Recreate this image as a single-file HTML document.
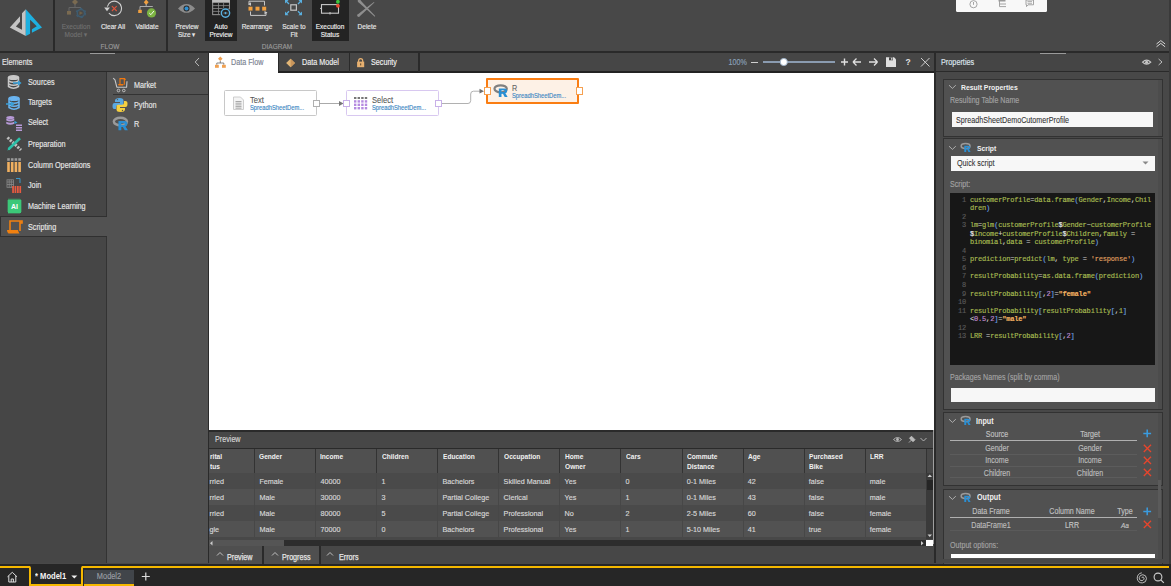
<!DOCTYPE html>
<html><head><meta charset="utf-8"><style>
html,body{margin:0;padding:0;width:1171px;height:586px;overflow:hidden;background:#484848;}
body>div,body>svg{position:absolute;}
body>div{-webkit-text-stroke:0.15px currentColor;}
body{font-family:"Liberation Sans",sans-serif;position:relative;}
</style></head><body>
<div style="left:0px;top:0px;width:1171px;height:51px;background:#484848;"></div>
<div style="left:0px;top:51px;width:1171px;height:2px;background:#2a2a2a;"></div>
<div style="left:53px;top:0px;width:2px;height:51px;background:#2a2a2a;"></div>
<div style="left:166px;top:0px;width:2px;height:51px;background:#2a2a2a;"></div>
<svg style="left:0px;top:0px;" width="54" height="51" viewBox="0 0 54 51"><path d="M25.8,9.2 L25.8,36 L9.8,27.5 L20,16.2 L20,21.7 L15.9,26.6 L22,29.8 L22,13.3 Z" fill="#c4c4c4"/><path d="M25.8,9.2 L42,27.5 L31.9,32.7 L31.9,29.3 L36.8,26.3 L30.1,19.7 L30.1,33.8 L25.8,36 Z" fill="#1eb0e0"/></svg>
<svg style="left:60px;top:0px;" width="32" height="20" viewBox="0 0 32 20"><path d="M15,-1 L18,2 L15,5 L12,2 Z" fill="#7a6a50"/><path d="M15,4 V7.5 M9,7.5 H21 M9,7.5 V11" stroke="#666" stroke-width="1" fill="none"/><rect x="7" y="11" width="4" height="3.6" fill="#7a6a50"/><circle cx="20.9" cy="13.1" r="3.6" fill="none" stroke="#3e5c70" stroke-width="1.4"/><circle cx="20.9" cy="13.1" r="4.6" fill="none" stroke="#3e5c70" stroke-width="1.3" stroke-dasharray="2.4 2.63"/><path d="M19.5,11.2 L23,13.1 L19.5,15 Z" fill="#6e6048"/></svg>
<div style="left:-24.00px;width:200px;text-align:center;top:23px;font-size:7.47px;line-height:7.47px;color:#707070;font-weight:normal;font-family:'Liberation Sans',sans-serif;white-space:nowrap;transform:scaleX(0.8696);transform-origin:center top;">Execution</div>
<div style="left:-24.00px;width:200px;text-align:center;top:31px;font-size:7.47px;line-height:7.47px;color:#707070;font-weight:normal;font-family:'Liberation Sans',sans-serif;white-space:nowrap;transform:scaleX(0.8696);transform-origin:center top;">Model ▾</div>
<svg style="left:104px;top:0px;" width="22" height="20" viewBox="0 0 22 20"><path d="M3.35,6.54 A7.2,7.2 0 1 1 4.87,13.12" fill="none" stroke="#d0d0d0" stroke-width="1.1"/><path d="M0.2,7.6 L5.9,7.6 L3,11.2 Z" fill="#d0d0d0"/><path d="M7.9,6.2 L12.7,11 M12.7,6.2 L7.9,11" stroke="#e0553c" stroke-width="1.1"/></svg>
<div style="left:12.50px;width:200px;text-align:center;top:23px;font-size:7.47px;line-height:7.47px;color:#e8e8e8;font-weight:normal;font-family:'Liberation Sans',sans-serif;white-space:nowrap;transform:scaleX(0.8696);transform-origin:center top;">Clear All</div>
<svg style="left:132px;top:0px;" width="30" height="20" viewBox="0 0 30 20"><path d="M14.2,-0.5 L16.6,2.2 L14.2,4.9 L11.8,2.2 Z" fill="#f0a040"/><path d="M14.2,4 V6.5 M8,6.5 H20.8 M8,6.5 V10" stroke="#aaa" stroke-width="1" fill="none"/><rect x="6.2" y="9.8" width="3.6" height="3.2" fill="#f0a040"/><circle cx="19.5" cy="12.9" r="4.6" fill="#7cb342"/><path d="M17.2,13 L18.9,14.7 L21.9,11" stroke="#fff" stroke-width="0.9" fill="none"/></svg>
<div style="left:47.20px;width:200px;text-align:center;top:23px;font-size:7.47px;line-height:7.47px;color:#e8e8e8;font-weight:normal;font-family:'Liberation Sans',sans-serif;white-space:nowrap;transform:scaleX(0.8696);transform-origin:center top;">Validate</div>
<svg style="left:176px;top:0px;" width="22" height="18" viewBox="0 0 22 18"><path d="M2,8.4 Q10.5,-0.5 19,8.4 Q10.5,17.3 2,8.4 Z" fill="#8c8c8c"/><circle cx="10.5" cy="8.4" r="3" fill="#2a2a2a"/><circle cx="10.5" cy="8.4" r="2" fill="#2f8fd0"/></svg>
<div style="left:87.00px;width:200px;text-align:center;top:23px;font-size:7.47px;line-height:7.47px;color:#e8e8e8;font-weight:normal;font-family:'Liberation Sans',sans-serif;white-space:nowrap;transform:scaleX(0.8696);transform-origin:center top;">Preview</div>
<div style="left:87.00px;width:200px;text-align:center;top:31px;font-size:7.47px;line-height:7.47px;color:#e8e8e8;font-weight:normal;font-family:'Liberation Sans',sans-serif;white-space:nowrap;transform:scaleX(0.8696);transform-origin:center top;">Size ▾</div>
<div style="left:205px;top:0px;width:32px;height:41px;background:#232323;"></div>
<svg style="left:205px;top:0px;" width="32" height="20" viewBox="0 0 32 20"><rect x="7.7" y="-1" width="16.7" height="15.7" fill="#202020" stroke="#a8a8a8" stroke-width="0.9"/><rect x="7.2" y="-1" width="17.6" height="3.7" fill="#bdbdbd"/><path d="M7.7,5.6 H24.4 M7.7,8.5 H24.4 M7.7,11.4 H24.4 M13.5,2.7 V14.7 M18.6,2.7 V14.7" stroke="#8a8a8a" stroke-width="0.8"/><circle cx="20.5" cy="13.1" r="5.5" fill="#232323"/><circle cx="20.5" cy="13.1" r="4.15" fill="none" stroke="#5ab0e0" stroke-width="1.4"/><path d="M17.7,13.1 Q20.5,10.7 23.3,13.1 Q20.5,15.5 17.7,13.1Z" fill="none" stroke="#4a4a4a" stroke-width="0.8"/><circle cx="20.5" cy="13.1" r="1.1" fill="#5ab0e0"/></svg>
<div style="left:121.00px;width:200px;text-align:center;top:23px;font-size:7.47px;line-height:7.47px;color:#f0f0f0;font-weight:normal;font-family:'Liberation Sans',sans-serif;white-space:nowrap;transform:scaleX(0.8696);transform-origin:center top;">Auto</div>
<div style="left:121.00px;width:200px;text-align:center;top:31px;font-size:7.47px;line-height:7.47px;color:#f0f0f0;font-weight:normal;font-family:'Liberation Sans',sans-serif;white-space:nowrap;transform:scaleX(0.8696);transform-origin:center top;">Preview</div>
<svg style="left:245px;top:0px;" width="25" height="20" viewBox="0 0 25 20"><path d="M4,4.5 V1.2 H19.5 V5.5 M21,12 V15.4 H5.5 V11.5" stroke="#c8c8c8" stroke-width="1" fill="none"/><path d="M3,4.2 L6,2.2 L6,5.8Z M22.5,12.6 L19.5,14.6 L19.5,11Z" fill="#c8c8c8"/><rect x="3.5" y="6.7" width="4" height="3.9" fill="#f0a040"/><rect x="10.5" y="6.7" width="4" height="3.9" fill="#f0a040"/><rect x="17.2" y="6.7" width="4" height="3.9" fill="#f0a040"/></svg>
<div style="left:157.00px;width:200px;text-align:center;top:23px;font-size:7.47px;line-height:7.47px;color:#e8e8e8;font-weight:normal;font-family:'Liberation Sans',sans-serif;white-space:nowrap;transform:scaleX(0.8696);transform-origin:center top;">Rearrange</div>
<svg style="left:280px;top:0px;" width="27" height="18" viewBox="0 0 27 18"><rect x="10.8" y="4.8" width="5.6" height="5.4" fill="none" stroke="#c4c4c4" stroke-width="1.2"/><g fill="#5ab0e0"><path d="M5,0 H8.6 L5,3.6Z M22,0 H18.4 L22,3.6Z M5,15.2 H8.6 L5,11.6Z M22,15.2 H18.4 L22,11.6Z"/></g><path d="M6,1 L9,4 M21,1 L18,4 M6,14.2 L9,11.2 M21,14.2 L18,11.2" stroke="#5ab0e0" stroke-width="1.3"/></svg>
<div style="left:193.50px;width:200px;text-align:center;top:23px;font-size:7.47px;line-height:7.47px;color:#e8e8e8;font-weight:normal;font-family:'Liberation Sans',sans-serif;white-space:nowrap;transform:scaleX(0.8696);transform-origin:center top;">Scale to</div>
<div style="left:193.50px;width:200px;text-align:center;top:31px;font-size:7.47px;line-height:7.47px;color:#e8e8e8;font-weight:normal;font-family:'Liberation Sans',sans-serif;white-space:nowrap;transform:scaleX(0.8696);transform-origin:center top;">Fit</div>
<div style="left:312px;top:0px;width:36.5px;height:41px;background:#232323;"></div>
<svg style="left:312px;top:0px;" width="37" height="18" viewBox="0 0 37 18"><rect x="9.5" y="4.6" width="17" height="8.6" fill="none" stroke="#c8c8c8" stroke-width="1.1"/><path d="M8,8.4 H10 M18,12 V14.5" stroke="#c8c8c8" stroke-width="1"/><circle cx="25.9" cy="1.8" r="1.9" fill="#3ec63e"/><circle cx="25.9" cy="5.8" r="1.9" fill="#e8452c"/></svg>
<div style="left:230.20px;width:200px;text-align:center;top:23px;font-size:7.47px;line-height:7.47px;color:#f0f0f0;font-weight:normal;font-family:'Liberation Sans',sans-serif;white-space:nowrap;transform:scaleX(0.8696);transform-origin:center top;">Execution</div>
<div style="left:230.20px;width:200px;text-align:center;top:31px;font-size:7.47px;line-height:7.47px;color:#f0f0f0;font-weight:normal;font-family:'Liberation Sans',sans-serif;white-space:nowrap;transform:scaleX(0.8696);transform-origin:center top;">Status</div>
<svg style="left:355px;top:0px;" width="24" height="20" viewBox="0 0 24 20"><g fill="#8e8e8e"><path d="M3.12,1.9 Q12,9.5 19.72,16.69 L20.28,16.11 Q13,8.5 5.08,-0.1 Z"/><circle cx="4.1" cy="0.9" r="1.4"/><path d="M18.94,1.9 Q10,8.5 2.69,14.43 L4.51,16.57 Q12,9.5 19.46,2.5 Z"/><circle cx="3.6" cy="15.5" r="1.4"/></g></svg>
<div style="left:266.80px;width:200px;text-align:center;top:23px;font-size:7.47px;line-height:7.47px;color:#e8e8e8;font-weight:normal;font-family:'Liberation Sans',sans-serif;white-space:nowrap;transform:scaleX(0.8696);transform-origin:center top;">Delete</div>
<div style="left:10.00px;width:200px;text-align:center;top:43px;font-size:7.47px;line-height:7.47px;color:#9a9a9a;font-weight:normal;font-family:'Liberation Sans',sans-serif;white-space:nowrap;transform:scaleX(0.8696);transform-origin:center top;">FLOW</div>
<div style="left:176.50px;width:200px;text-align:center;top:43px;font-size:7.47px;line-height:7.47px;color:#9a9a9a;font-weight:normal;font-family:'Liberation Sans',sans-serif;white-space:nowrap;transform:scaleX(0.8696);transform-origin:center top;">DIAGRAM</div>
<div style="left:955.5px;top:0px;width:91px;height:11.7px;background:#f8f8f8;border-radius:0 0 1.5px 1.5px"></div>
<svg style="left:955px;top:0px;" width="92" height="12" viewBox="0 0 92 12"><circle cx="18.5" cy="4.2" r="3.6" fill="none" stroke="#9a9a9a" stroke-width="0.9"/><path d="M18.5,2 V4.8" stroke="#9a9a9a" stroke-width="0.9"/><rect x="43.5" y="-1" width="7" height="2.5" fill="#9a9a9a"/><path d="M44.5,1 V6.6 H51 M44.5,4 H51" stroke="#9a9a9a" stroke-width="0.9" fill="none"/><path d="M71,0 H78.5 V4.8 H73 L71.5,6.6 L71.5,4.8 H71 Z" fill="none" stroke="#9a9a9a" stroke-width="0.9"/><path d="M72.5,1.6 H77 M72.5,3.3 H77" stroke="#9a9a9a" stroke-width="0.8"/></svg>
<svg style="left:1155px;top:38px;" width="12" height="10" viewBox="0 0 12 10"><path d="M1.5,6 L5.8,2.6 L10.1,6 M1.5,8.8 L5.8,5.4 L10.1,8.8" stroke="#d8d8d8" stroke-width="1" fill="none"/></svg>
<div style="left:0px;top:53px;width:208px;height:18px;background:#454545;"></div>
<div style="left:0px;top:71px;width:208px;height:1px;background:#2a2a2a;"></div>
<div style="left:2.4px;top:58px;font-size:8.39px;line-height:8.39px;color:#e6e6e6;font-weight:normal;font-family:'Liberation Sans',sans-serif;white-space:nowrap;transform:scaleX(0.8696);transform-origin:left top;">Elements</div>
<svg style="left:193px;top:56px;" width="8" height="12" viewBox="0 0 8 12"><path d="M6,2 L2.2,6 L6,10" stroke="#bbb" stroke-width="1" fill="none"/></svg>
<div style="left:0px;top:72px;width:106px;height:491px;background:#464646;"></div>
<div style="left:106px;top:72px;width:1px;height:491px;background:#333;"></div>
<div style="left:107px;top:72px;width:101px;height:491px;background:#525252;"></div>
<div style="left:208px;top:53px;width:1px;height:510px;background:#2a2a2a;"></div>
<div style="left:0px;top:216px;width:107px;height:21px;background:#525252;box-sizing:border-box;border-top:1px solid #303030;border-bottom:1px solid #303030;border-left:1px solid #303030"></div>
<div style="left:106px;top:72px;width:1px;height:144px;background:#333;"></div>
<div style="left:106px;top:237px;width:1px;height:326px;background:#333;"></div>
<div style="left:27.5px;top:78px;font-size:8.34px;line-height:8.34px;color:#e6e6e6;font-weight:normal;font-family:'Liberation Sans',sans-serif;white-space:nowrap;transform:scaleX(0.8696);transform-origin:left top;">Sources</div>
<div style="left:27.5px;top:98px;font-size:8.34px;line-height:8.34px;color:#e6e6e6;font-weight:normal;font-family:'Liberation Sans',sans-serif;white-space:nowrap;transform:scaleX(0.8696);transform-origin:left top;">Targets</div>
<div style="left:27.5px;top:118px;font-size:8.34px;line-height:8.34px;color:#e6e6e6;font-weight:normal;font-family:'Liberation Sans',sans-serif;white-space:nowrap;transform:scaleX(0.8696);transform-origin:left top;">Select</div>
<div style="left:27.5px;top:140px;font-size:8.34px;line-height:8.34px;color:#e6e6e6;font-weight:normal;font-family:'Liberation Sans',sans-serif;white-space:nowrap;transform:scaleX(0.8696);transform-origin:left top;">Preparation</div>
<div style="left:27.5px;top:161px;font-size:8.34px;line-height:8.34px;color:#e6e6e6;font-weight:normal;font-family:'Liberation Sans',sans-serif;white-space:nowrap;transform:scaleX(0.8696);transform-origin:left top;">Column Operations</div>
<div style="left:27.5px;top:181px;font-size:8.34px;line-height:8.34px;color:#e6e6e6;font-weight:normal;font-family:'Liberation Sans',sans-serif;white-space:nowrap;transform:scaleX(0.8696);transform-origin:left top;">Join</div>
<div style="left:27.5px;top:202px;font-size:8.34px;line-height:8.34px;color:#e6e6e6;font-weight:normal;font-family:'Liberation Sans',sans-serif;white-space:nowrap;transform:scaleX(0.8696);transform-origin:left top;">Machine Learning</div>
<div style="left:27.5px;top:223px;font-size:8.34px;line-height:8.34px;color:#e6e6e6;font-weight:normal;font-family:'Liberation Sans',sans-serif;white-space:nowrap;transform:scaleX(0.8696);transform-origin:left top;">Scripting</div>
<svg style="left:7px;top:74px;" width="16" height="17" viewBox="0 0 16 17"><g fill="none" stroke="#c8c8c8" stroke-width="1.5"><ellipse cx="6.5" cy="3.5" rx="5" ry="1.8" fill="#c8c8c8"/><path d="M1.5,3.5 V12.5 Q6.5,15.8 11.5,12.5 V3.5 M1.5,6.8 Q6.5,9.8 11.5,6.8 M1.5,9.8 Q6.5,12.8 11.5,9.8"/></g><path d="M6,8.2 H11 V6.2 L14.6,9 L11,11.8 V9.8 H6Z" fill="#3aa0d8"/></svg>
<svg style="left:5px;top:95px;" width="16" height="17" viewBox="0 0 16 17"><g fill="none" stroke="#6ab4f0" stroke-width="1.5"><ellipse cx="9" cy="3.5" rx="5" ry="1.8" fill="#6ab4f0"/><path d="M4,3.5 V12.5 Q9,15.8 14,12.5 V3.5 M4,6.8 Q9,9.8 14,6.8 M4,9.8 Q9,12.8 14,9.8"/></g><path d="M1,8.2 H6 V6.2 L9.6,9 L6,11.8 V9.8 H1Z" fill="#3aa0d8"/></svg>
<svg style="left:5px;top:115px;" width="18" height="17" viewBox="0 0 18 17"><g fill="#b79ad8"><ellipse cx="5.3" cy="2.6" rx="4" ry="1.6"/><path d="M1.3,3.6 Q5.3,5.6 9.3,3.6 V5.6 Q5.3,7.6 1.3,5.6Z M1.3,6.8 Q5.3,8.8 9.3,6.8 V8.8 Q5.3,10.8 1.3,8.8Z"/><rect x="11" y="9.5" width="6" height="1.5"/><rect x="11" y="12" width="6" height="1.5"/><rect x="11" y="14.5" width="6" height="1.5"/></g><path d="M9.5,5.8 L12.5,7.4 L9.5,9Z" fill="#3aa0d8"/></svg>
<svg style="left:5px;top:136px;" width="18" height="16" viewBox="0 0 18 16"><path d="M2.5,1.5 L16,14" stroke="#c0c0c0" stroke-width="3" stroke-dasharray="2.2 1.2"/><path d="M3.5,13.2 L15,2.2" stroke="#2dbfa8" stroke-width="2.6"/><path d="M2.2,14.5 L3.8,12 L5,13.4Z" fill="#2dbfa8"/></svg>
<svg style="left:5px;top:157px;" width="18" height="16" viewBox="0 0 18 16"><g fill="#9a9a9a"><rect x="2.2" y="1.2" width="2.6" height="2.6"/><rect x="5.9" y="1.2" width="2.6" height="2.6"/><rect x="9.6" y="1.2" width="2.6" height="2.6"/><rect x="13.3" y="1.2" width="2.6" height="2.6"/></g><g fill="#f0b060"><rect x="2.2" y="5" width="2.6" height="10"/><rect x="5.9" y="5" width="2.6" height="10"/><rect x="9.6" y="5" width="2.6" height="10"/><rect x="13.3" y="5" width="2.6" height="10"/></g></svg>
<svg style="left:5px;top:177px;" width="18" height="17" viewBox="0 0 18 17"><g fill="none" stroke="#8a8a8a" stroke-width="0.8"><rect x="2" y="2.8" width="6.5" height="7.5"/><path d="M2,5 H8.5 M2,7.5 H8.5 M4.2,2.8 V10.3 M6.3,2.8 V10.3"/></g><g fill="#e85a40"><rect x="7.2" y="9" width="1.7" height="7"/><rect x="9.6" y="9" width="1.7" height="7"/><rect x="12" y="9" width="1.7" height="7"/><rect x="14.4" y="9" width="1.7" height="7"/></g><path d="M11,1.5 H15 V6" stroke="#3aa0d8" stroke-width="0.9" fill="none"/></svg>
<svg style="left:6px;top:198px;" width="17" height="17" viewBox="0 0 17 17"><rect x="2" y="1.5" width="13" height="13.5" fill="#3cc878"/><path d="M1,3 H2 M1,5 H2 M1,7 H2 M1,9 H2 M1,11 H2 M1,13 H2 M15,3 H16 M15,5 H16 M15,7 H16 M15,9 H16 M15,11 H16 M15,13 H16 M3,0.5 V1.5 M5,0.5 V1.5 M7,0.5 V1.5 M9,0.5 V1.5 M11,0.5 V1.5 M13,0.5 V1.5 M3,15 V16 M5,15 V16 M7,15 V16 M9,15 V16 M11,15 V16 M13,15 V16" stroke="#3cc878" stroke-width="0.7"/><text x="8.5" y="11.2" font-family="Liberation Sans" font-size="7" font-weight="bold" fill="#fff" text-anchor="middle">AI</text></svg>
<svg style="left:6px;top:219px;" width="17" height="16" viewBox="0 0 17 16"><path d="M4,12 V2 H14 V12 M14,2 H16 V4 H14" stroke="#f08010" stroke-width="1.6" fill="none"/><path d="M1,11 H12 Q12.5,13.5 13.5,14.5 H2.5 Q1,14 1,11Z" fill="#f08010"/></svg>
<div style="left:133.8px;top:81px;font-size:8.34px;line-height:8.34px;color:#e6e6e6;font-weight:normal;font-family:'Liberation Sans',sans-serif;white-space:nowrap;transform:scaleX(0.8696);transform-origin:left top;">Market</div>
<div style="left:113px;top:94px;width:95px;height:1px;background:#333;"></div>
<div style="left:133.8px;top:101px;font-size:8.34px;line-height:8.34px;color:#e6e6e6;font-weight:normal;font-family:'Liberation Sans',sans-serif;white-space:nowrap;transform:scaleX(0.8696);transform-origin:left top;">Python</div>
<div style="left:133.8px;top:120px;font-size:8.34px;line-height:8.34px;color:#e6e6e6;font-weight:normal;font-family:'Liberation Sans',sans-serif;white-space:nowrap;transform:scaleX(0.8696);transform-origin:left top;">R</div>
<svg style="left:110px;top:74px;" width="20" height="20" viewBox="0 0 20 20"><path d="M3.2,4.2 L5,5.8 L6.8,13.2 H16.6 L17,7.2" stroke="#c8c8c8" stroke-width="1.1" fill="none" stroke-linejoin="round"/><circle cx="8.5" cy="16.5" r="1.3" fill="none" stroke="#c8c8c8" stroke-width="0.9"/><circle cx="13.8" cy="16.5" r="1.3" fill="none" stroke="#c8c8c8" stroke-width="0.9"/><path d="M10,10.5 V4.6 H15 M14.3,4.6 V10.8" stroke="#f07810" stroke-width="1.1" fill="none"/><circle cx="14.9" cy="5.3" r="0.9" fill="#f07810"/><path d="M8,10 H13.6 L13.2,11.6 H8.6Z" fill="#f07810"/></svg>
<svg style="left:112px;top:97px;" width="16" height="16" viewBox="0 0 16 16"><path d="M7.8,1 Q3,1 3,3.5 V5 H8 V6 H2.5 Q0.5,6 0.5,9.2 Q0.5,12 2.5,12 H4 V10 Q4,8.2 6,8.2 H10 Q11.5,8.2 11.5,6.7 V3.5 Q11.5,1 7.8,1Z" fill="#5aa8e0"/><path d="M8.2,15 Q13,15 13,12.5 V11 H8 V10 H13.5 Q15.5,10 15.5,6.8 Q15.5,4 13.5,4 H12 V6 Q12,7.8 10,7.8 H6 Q4.5,7.8 4.5,9.3 V12.5 Q4.5,15 8.2,15Z" fill="#f5d040"/><circle cx="5.5" cy="2.6" r="0.7" fill="#555"/><circle cx="10.5" cy="13.4" r="0.7" fill="#555"/></svg>
<svg style="left:108.8px;top:111.4px" width="22.5" height="22.5" viewBox="0 0 15 15"><ellipse cx="7.6" cy="7.0" rx="4.4" ry="2.5" fill="none" stroke="#9a9a9a" stroke-width="1.6"/><path fill-rule="evenodd" fill="#2a8fd4" d="M6.3,6.7 H10.4 Q12.3,6.7 12.3,8.5 Q12.3,9.9 11,10.25 L12.6,12.9 H10.5 L9.2,10.6 H8.2 V12.9 H6.3 Z M8.2,8.1 V9.3 H10 Q10.5,9.3 10.5,8.7 Q10.5,8.1 10,8.1 Z"/></svg>
<div style="left:209px;top:53px;width:725px;height:18px;background:#464646;"></div>
<div style="left:209px;top:71px;width:725px;height:2px;background:#222;"></div>
<div style="left:209px;top:53px;width:69px;height:20px;background:#ffffff;"></div>
<div style="left:278px;top:53px;width:1px;height:19px;background:#2a2a2a;"></div>
<div style="left:348.5px;top:53px;width:1.5px;height:19px;background:#2a2a2a;"></div>
<div style="left:418px;top:53px;width:1.5px;height:19px;background:#2a2a2a;"></div>
<svg style="left:214px;top:56px;" width="14" height="13" viewBox="0 0 14 13"><path d="M6.3,0.5 L8.6,2.8 L6.3,5.1 L4,2.8Z" fill="#f0a050"/><path d="M6.3,5 V7 M2.8,7 H9.8 M2.8,7 V8.8 M9.8,7 V8.8" stroke="#666" stroke-width="0.8" fill="none"/><rect x="1" y="8.8" width="3.8" height="3" fill="#f0a050"/><rect x="8" y="8.8" width="3.8" height="3" fill="#f0a050"/></svg>
<div style="left:231.3px;top:59px;font-size:8.28px;line-height:8.28px;color:#7a8290;font-weight:normal;font-family:'Liberation Sans',sans-serif;white-space:nowrap;transform:scaleX(0.8696);transform-origin:left top;">Data Flow</div>
<svg style="left:285px;top:57px;" width="12" height="12" viewBox="0 0 12 12"><path d="M5.6,1.8 L10,6 L5.6,10.2 L1.1,6Z" fill="#e2b676"/><path d="M5.6,1.8 L10,6 L5.6,10.2Z" fill="#c9955a"/></svg>
<div style="left:301.8px;top:59px;font-size:8.28px;line-height:8.28px;color:#f0f0f0;font-weight:normal;font-family:'Liberation Sans',sans-serif;white-space:nowrap;transform:scaleX(0.8696);transform-origin:left top;">Data Model</div>
<svg style="left:355px;top:57px;" width="11" height="12" viewBox="0 0 11 12"><path d="M3.6,5 V3.8 Q3.6,1.6 5.65,1.6 Q7.7,1.6 7.7,3.8 V5" stroke="#e6b070" stroke-width="1.2" fill="none"/><rect x="2.1" y="4.6" width="7.1" height="5.6" fill="#e6b070"/><rect x="5.1" y="6.4" width="1.1" height="2" fill="#6a5030"/></svg>
<div style="left:371.4px;top:59px;font-size:8.28px;line-height:8.28px;color:#f0f0f0;font-weight:normal;font-family:'Liberation Sans',sans-serif;white-space:nowrap;transform:scaleX(0.8696);transform-origin:left top;">Security</div>
<div style="left:446.70px;width:300px;text-align:right;top:59px;font-size:8.28px;line-height:8.28px;color:#8aa0b8;font-weight:normal;font-family:'Liberation Sans',sans-serif;white-space:nowrap;transform:scaleX(0.8696);transform-origin:right top;">100%</div>
<div style="left:750.6px;top:61.5px;width:7.7px;height:1.6px;background:#cfcfcf;"></div>
<div style="left:763px;top:61.4px;width:72px;height:1.6px;background:#8a9bb0;"></div>
<svg style="left:779px;top:57px;" width="10" height="10" viewBox="0 0 10 10"><circle cx="4.8" cy="5" r="3.6" fill="#fff" stroke="#9fb3c8" stroke-width="1"/></svg>
<svg style="left:840px;top:56px;" width="70" height="14" viewBox="0 0 70 14"><path d="M1,6 H8 M4.5,2.5 V9.5" stroke="#e0e0e0" stroke-width="1.4"/><path d="M13,6 H21 M13,6 L16.5,2.5 M13,6 L16.5,9.5" stroke="#e0e0e0" stroke-width="1.3" fill="none"/><path d="M29,6 H37.5 M37.5,6 L34,2.5 M37.5,6 L34,9.5" stroke="#e0e0e0" stroke-width="1.3" fill="none"/><path d="M46,1.3 H54 L56,3.3 V11 H46Z" fill="#e0e0e0"/><rect x="49" y="1.3" width="4" height="3" fill="#464646"/><rect x="51.2" y="1.8" width="1.2" height="2" fill="#e0e0e0"/></svg>
<div style="left:898.20px;width:20px;text-align:center;top:57px;font-size:9.77px;line-height:9.77px;color:#e0e0e0;font-weight:bold;font-family:'Liberation Sans',sans-serif;white-space:nowrap;transform:scaleX(0.8696);transform-origin:center top;-webkit-text-stroke:0;">?</div>
<svg style="left:920px;top:57px;" width="11" height="11" viewBox="0 0 11 11"><path d="M1,1 L9.5,9.5 M9.5,1 L1,9.5" stroke="#cfcfcf" stroke-width="1"/></svg>
<div style="left:209px;top:73px;width:725px;height:357px;background:#ffffff;"></div>
<div style="left:934px;top:53px;width:2px;height:510px;background:#2a2a2a;"></div>
<div style="left:224.2px;top:90.2px;width:92.4px;height:25.6px;background:#fff;box-sizing:border-box;border:1.5px solid #c8c8c8;border-radius:1.5px"></div>
<svg style="left:232px;top:96px;" width="13" height="15" viewBox="0 0 13 15"><path d="M1.5,1 H8.5 L11.5,4 V13.5 H1.5Z" fill="#f4f4f4" stroke="#c8c8c8" stroke-width="0.9"/><path d="M3.5,5.5 H9.5 M3.5,7.2 H9.5 M3.5,8.9 H9.5 M3.5,10.6 H9.5 M3.5,12.2 H9.5" stroke="#a8a8a8" stroke-width="1"/></svg>
<div style="left:249.8px;top:96px;font-size:8.74px;line-height:8.74px;color:#555;font-weight:normal;font-family:'Liberation Sans',sans-serif;white-space:nowrap;transform:scaleX(0.8696);transform-origin:left top;-webkit-text-stroke:0.08px currentColor">Text</div>
<div style="left:249.8px;top:105px;font-size:6.67px;line-height:6.67px;color:#3d88c4;font-weight:normal;font-family:'Liberation Sans',sans-serif;white-space:nowrap;transform:scaleX(0.8696);transform-origin:left top;">SpreadhSheetDem...</div>
<div style="left:312.6px;top:100px;width:7.1px;height:6.8px;background:#fff;box-sizing:border-box;border:1.1px solid #b0b0b0"></div>
<svg style="left:319px;top:100px;" width="30" height="8" viewBox="0 0 30 8"><path d="M0.5,3.5 H21" stroke="#a0a0a0" stroke-width="0.9"/><path d="M20,1 L24.5,3.5 L20,6Z" fill="#777"/></svg>
<div style="left:346.3px;top:90.4px;width:92.3px;height:25.7px;background:#fff;box-sizing:border-box;border:1.2px solid #d8c8f0;border-radius:1.5px"></div>
<div style="left:343.3px;top:99.9px;width:7.2px;height:7.2px;background:#fff;box-sizing:border-box;border:1px solid #c8b0e8"></div>
<svg style="left:353px;top:96px;" width="16" height="16" viewBox="0 0 16 16"><g fill="#777"><rect x="1" y="1" width="2.4" height="2"/><rect x="4.6" y="1" width="2.4" height="2"/><rect x="8.2" y="1" width="2.4" height="2"/><rect x="11.8" y="1" width="2.4" height="2"/></g><g fill="#b58ae0"><rect x="1" y="4.2" width="2.4" height="2.4"/><rect x="4.6" y="4.2" width="2.4" height="2.4"/><rect x="8.2" y="4.2" width="2.4" height="2.4"/><rect x="11.8" y="4.2" width="2.4" height="2.4"/><rect x="1" y="7.6" width="2.4" height="2.4"/><rect x="4.6" y="7.6" width="2.4" height="2.4"/><rect x="8.2" y="7.6" width="2.4" height="2.4"/><rect x="11.8" y="7.6" width="2.4" height="2.4"/><rect x="1" y="11" width="2.4" height="2.4"/><rect x="4.6" y="11" width="2.4" height="2.4"/><rect x="8.2" y="11" width="2.4" height="2.4"/><rect x="11.8" y="11" width="2.4" height="2.4"/></g></svg>
<div style="left:372px;top:96px;font-size:8.74px;line-height:8.74px;color:#555;font-weight:normal;font-family:'Liberation Sans',sans-serif;white-space:nowrap;transform:scaleX(0.8696);transform-origin:left top;-webkit-text-stroke:0.08px currentColor">Select</div>
<div style="left:372px;top:105px;font-size:6.67px;line-height:6.67px;color:#3d88c4;font-weight:normal;font-family:'Liberation Sans',sans-serif;white-space:nowrap;transform:scaleX(0.8696);transform-origin:left top;">SpreadhSheetDem...</div>
<div style="left:434.8px;top:99.9px;width:7.4px;height:7.2px;background:#fff;box-sizing:border-box;border:1px solid #c8b0e8"></div>
<svg style="left:442px;top:88px;" width="45" height="20" viewBox="0 0 45 20"><path d="M0,15.5 H26 Q28.7,15.5 28.7,12.5 V6 Q28.7,3.2 31.5,3.2 H38" stroke="#a8a8a8" stroke-width="0.9" fill="none"/><path d="M37.5,0.8 L42,3.2 L37.5,5.6Z" fill="#707070"/></svg>
<div style="left:486.1px;top:78.1px;width:93px;height:26px;background:#fdf1e6;box-sizing:border-box;border:2.4px solid #fa7d12;border-radius:1px"></div>
<div style="left:483.5px;top:87.4px;width:7.2px;height:7.4px;background:#fff;box-sizing:border-box;border:1px solid #f5a050"></div>
<div style="left:575.5px;top:87.4px;width:7px;height:7.4px;background:#fff;box-sizing:border-box;border:1px solid #f5a050"></div>
<svg style="left:490px;top:79.4px" width="21.0" height="21.0" viewBox="0 0 15 15"><ellipse cx="7.6" cy="7.0" rx="4.4" ry="2.5" fill="none" stroke="#808080" stroke-width="1.6"/><path fill-rule="evenodd" fill="#2a8fd4" d="M6.3,6.7 H10.4 Q12.3,6.7 12.3,8.5 Q12.3,9.9 11,10.25 L12.6,12.9 H10.5 L9.2,10.6 H8.2 V12.9 H6.3 Z M8.2,8.1 V9.3 H10 Q10.5,9.3 10.5,8.7 Q10.5,8.1 10,8.1 Z"/></svg>
<div style="left:512.1px;top:85px;font-size:8.28px;line-height:8.28px;color:#606060;font-weight:normal;font-family:'Liberation Sans',sans-serif;white-space:nowrap;transform:scaleX(0.8696);transform-origin:left top;-webkit-text-stroke:0.08px currentColor">R</div>
<div style="left:512.1px;top:93px;font-size:6.67px;line-height:6.67px;color:#3d88c4;font-weight:normal;font-family:'Liberation Sans',sans-serif;white-space:nowrap;transform:scaleX(0.8696);transform-origin:left top;">SpreadhSheetDem...</div>
<div style="left:209px;top:430px;width:725px;height:2px;background:#2a2a2a;"></div>
<div style="left:209px;top:432px;width:725px;height:16px;background:#474747;"></div>
<div style="left:209px;top:448px;width:725px;height:1px;background:#2a2a2a;"></div>
<div style="left:214.7px;top:436px;font-size:8.28px;line-height:8.28px;color:#d6d6d6;font-weight:normal;font-family:'Liberation Sans',sans-serif;white-space:nowrap;transform:scaleX(0.8696);transform-origin:left top;">Preview</div>
<svg style="left:890px;top:434px;" width="40" height="12" viewBox="0 0 40 12"><path d="M3.5,5.5 Q7.5,1.5 11.5,5.5 Q7.5,9.5 3.5,5.5Z" fill="none" stroke="#bbb" stroke-width="0.9"/><circle cx="7.5" cy="5.5" r="1.4" fill="#bbb"/><path d="M19,8.5 L21.5,6 M20,3 L24,7 M21.5,2.2 L25,5.7 L23,7.7 L19.5,4.2Z" stroke="#bbb" stroke-width="0.9" fill="#bbb"/><path d="M30.5,4 L33.5,7 L36.5,4" stroke="#bbb" stroke-width="0.9" fill="none"/></svg>
<div style="left:209px;top:449px;width:717px;height:23.5px;background:#505050;"></div>
<div style="left:254.2px;top:449px;width:1px;height:23.5px;background:#333;"></div>
<div style="left:315.2px;top:449px;width:1px;height:23.5px;background:#333;"></div>
<div style="left:376.3px;top:449px;width:1px;height:23.5px;background:#333;"></div>
<div style="left:437.3px;top:449px;width:1px;height:23.5px;background:#333;"></div>
<div style="left:498.4px;top:449px;width:1px;height:23.5px;background:#333;"></div>
<div style="left:559.4px;top:449px;width:1px;height:23.5px;background:#333;"></div>
<div style="left:620.4px;top:449px;width:1px;height:23.5px;background:#333;"></div>
<div style="left:681.5px;top:449px;width:1px;height:23.5px;background:#333;"></div>
<div style="left:742.5px;top:449px;width:1px;height:23.5px;background:#333;"></div>
<div style="left:803.6px;top:449px;width:1px;height:23.5px;background:#333;"></div>
<div style="left:864.6px;top:449px;width:1px;height:23.5px;background:#333;"></div>
<div style="left:925.6px;top:449px;width:1px;height:23.5px;background:#333;"></div>
<div style="left:209px;top:472.5px;width:717px;height:16px;background:#4a4a4a;"></div>
<div style="left:254.2px;top:472.5px;width:1px;height:16px;background:#474747;"></div>
<div style="left:315.2px;top:472.5px;width:1px;height:16px;background:#474747;"></div>
<div style="left:376.3px;top:472.5px;width:1px;height:16px;background:#474747;"></div>
<div style="left:437.3px;top:472.5px;width:1px;height:16px;background:#474747;"></div>
<div style="left:498.4px;top:472.5px;width:1px;height:16px;background:#474747;"></div>
<div style="left:559.4px;top:472.5px;width:1px;height:16px;background:#474747;"></div>
<div style="left:620.4px;top:472.5px;width:1px;height:16px;background:#474747;"></div>
<div style="left:681.5px;top:472.5px;width:1px;height:16px;background:#474747;"></div>
<div style="left:742.5px;top:472.5px;width:1px;height:16px;background:#474747;"></div>
<div style="left:803.6px;top:472.5px;width:1px;height:16px;background:#474747;"></div>
<div style="left:864.6px;top:472.5px;width:1px;height:16px;background:#474747;"></div>
<div style="left:925.6px;top:472.5px;width:1px;height:16px;background:#474747;"></div>
<div style="left:209px;top:488.5px;width:717px;height:16px;background:#525252;"></div>
<div style="left:254.2px;top:488.5px;width:1px;height:16px;background:#474747;"></div>
<div style="left:315.2px;top:488.5px;width:1px;height:16px;background:#474747;"></div>
<div style="left:376.3px;top:488.5px;width:1px;height:16px;background:#474747;"></div>
<div style="left:437.3px;top:488.5px;width:1px;height:16px;background:#474747;"></div>
<div style="left:498.4px;top:488.5px;width:1px;height:16px;background:#474747;"></div>
<div style="left:559.4px;top:488.5px;width:1px;height:16px;background:#474747;"></div>
<div style="left:620.4px;top:488.5px;width:1px;height:16px;background:#474747;"></div>
<div style="left:681.5px;top:488.5px;width:1px;height:16px;background:#474747;"></div>
<div style="left:742.5px;top:488.5px;width:1px;height:16px;background:#474747;"></div>
<div style="left:803.6px;top:488.5px;width:1px;height:16px;background:#474747;"></div>
<div style="left:864.6px;top:488.5px;width:1px;height:16px;background:#474747;"></div>
<div style="left:925.6px;top:488.5px;width:1px;height:16px;background:#474747;"></div>
<div style="left:209px;top:504.5px;width:717px;height:16px;background:#4a4a4a;"></div>
<div style="left:254.2px;top:504.5px;width:1px;height:16px;background:#474747;"></div>
<div style="left:315.2px;top:504.5px;width:1px;height:16px;background:#474747;"></div>
<div style="left:376.3px;top:504.5px;width:1px;height:16px;background:#474747;"></div>
<div style="left:437.3px;top:504.5px;width:1px;height:16px;background:#474747;"></div>
<div style="left:498.4px;top:504.5px;width:1px;height:16px;background:#474747;"></div>
<div style="left:559.4px;top:504.5px;width:1px;height:16px;background:#474747;"></div>
<div style="left:620.4px;top:504.5px;width:1px;height:16px;background:#474747;"></div>
<div style="left:681.5px;top:504.5px;width:1px;height:16px;background:#474747;"></div>
<div style="left:742.5px;top:504.5px;width:1px;height:16px;background:#474747;"></div>
<div style="left:803.6px;top:504.5px;width:1px;height:16px;background:#474747;"></div>
<div style="left:864.6px;top:504.5px;width:1px;height:16px;background:#474747;"></div>
<div style="left:925.6px;top:504.5px;width:1px;height:16px;background:#474747;"></div>
<div style="left:209px;top:520.5px;width:717px;height:16px;background:#525252;"></div>
<div style="left:254.2px;top:520.5px;width:1px;height:16px;background:#474747;"></div>
<div style="left:315.2px;top:520.5px;width:1px;height:16px;background:#474747;"></div>
<div style="left:376.3px;top:520.5px;width:1px;height:16px;background:#474747;"></div>
<div style="left:437.3px;top:520.5px;width:1px;height:16px;background:#474747;"></div>
<div style="left:498.4px;top:520.5px;width:1px;height:16px;background:#474747;"></div>
<div style="left:559.4px;top:520.5px;width:1px;height:16px;background:#474747;"></div>
<div style="left:620.4px;top:520.5px;width:1px;height:16px;background:#474747;"></div>
<div style="left:681.5px;top:520.5px;width:1px;height:16px;background:#474747;"></div>
<div style="left:742.5px;top:520.5px;width:1px;height:16px;background:#474747;"></div>
<div style="left:803.6px;top:520.5px;width:1px;height:16px;background:#474747;"></div>
<div style="left:864.6px;top:520.5px;width:1px;height:16px;background:#474747;"></div>
<div style="left:925.6px;top:520.5px;width:1px;height:16px;background:#474747;"></div>
<div style="left:209px;top:449px;width:717px;height:114px;background:transparent;"></div>
<div style="left:209.5px;top:453px;font-size:7.23px;line-height:7.23px;color:#f0f0f0;font-weight:bold;font-family:'Liberation Sans',sans-serif;white-space:nowrap;transform:scaleX(0.9132);transform-origin:left top;-webkit-text-stroke:0;">rital</div>
<div style="left:209.5px;top:463px;font-size:7.23px;line-height:7.23px;color:#f0f0f0;font-weight:bold;font-family:'Liberation Sans',sans-serif;white-space:nowrap;transform:scaleX(0.9132);transform-origin:left top;-webkit-text-stroke:0;">tus</div>
<div style="left:259.4px;top:453px;font-size:7.23px;line-height:7.23px;color:#f0f0f0;font-weight:bold;font-family:'Liberation Sans',sans-serif;white-space:nowrap;transform:scaleX(0.9132);transform-origin:left top;-webkit-text-stroke:0;">Gender</div>
<div style="left:320.4px;top:453px;font-size:7.23px;line-height:7.23px;color:#f0f0f0;font-weight:bold;font-family:'Liberation Sans',sans-serif;white-space:nowrap;transform:scaleX(0.9132);transform-origin:left top;-webkit-text-stroke:0;">Income</div>
<div style="left:381.5px;top:453px;font-size:7.23px;line-height:7.23px;color:#f0f0f0;font-weight:bold;font-family:'Liberation Sans',sans-serif;white-space:nowrap;transform:scaleX(0.9132);transform-origin:left top;-webkit-text-stroke:0;">Children</div>
<div style="left:442.5px;top:453px;font-size:7.23px;line-height:7.23px;color:#f0f0f0;font-weight:bold;font-family:'Liberation Sans',sans-serif;white-space:nowrap;transform:scaleX(0.9132);transform-origin:left top;-webkit-text-stroke:0;">Education</div>
<div style="left:503.59999999999997px;top:453px;font-size:7.23px;line-height:7.23px;color:#f0f0f0;font-weight:bold;font-family:'Liberation Sans',sans-serif;white-space:nowrap;transform:scaleX(0.9132);transform-origin:left top;-webkit-text-stroke:0;">Occupation</div>
<div style="left:564.6px;top:453px;font-size:7.23px;line-height:7.23px;color:#f0f0f0;font-weight:bold;font-family:'Liberation Sans',sans-serif;white-space:nowrap;transform:scaleX(0.9132);transform-origin:left top;-webkit-text-stroke:0;">Home</div>
<div style="left:564.6px;top:463px;font-size:7.23px;line-height:7.23px;color:#f0f0f0;font-weight:bold;font-family:'Liberation Sans',sans-serif;white-space:nowrap;transform:scaleX(0.9132);transform-origin:left top;-webkit-text-stroke:0;">Owner</div>
<div style="left:625.6px;top:453px;font-size:7.23px;line-height:7.23px;color:#f0f0f0;font-weight:bold;font-family:'Liberation Sans',sans-serif;white-space:nowrap;transform:scaleX(0.9132);transform-origin:left top;-webkit-text-stroke:0;">Cars</div>
<div style="left:686.7px;top:453px;font-size:7.23px;line-height:7.23px;color:#f0f0f0;font-weight:bold;font-family:'Liberation Sans',sans-serif;white-space:nowrap;transform:scaleX(0.9132);transform-origin:left top;-webkit-text-stroke:0;">Commute</div>
<div style="left:686.7px;top:463px;font-size:7.23px;line-height:7.23px;color:#f0f0f0;font-weight:bold;font-family:'Liberation Sans',sans-serif;white-space:nowrap;transform:scaleX(0.9132);transform-origin:left top;-webkit-text-stroke:0;">Distance</div>
<div style="left:747.7px;top:453px;font-size:7.23px;line-height:7.23px;color:#f0f0f0;font-weight:bold;font-family:'Liberation Sans',sans-serif;white-space:nowrap;transform:scaleX(0.9132);transform-origin:left top;-webkit-text-stroke:0;">Age</div>
<div style="left:808.8000000000001px;top:453px;font-size:7.23px;line-height:7.23px;color:#f0f0f0;font-weight:bold;font-family:'Liberation Sans',sans-serif;white-space:nowrap;transform:scaleX(0.9132);transform-origin:left top;-webkit-text-stroke:0;">Purchased</div>
<div style="left:808.8000000000001px;top:463px;font-size:7.23px;line-height:7.23px;color:#f0f0f0;font-weight:bold;font-family:'Liberation Sans',sans-serif;white-space:nowrap;transform:scaleX(0.9132);transform-origin:left top;-webkit-text-stroke:0;">Bike</div>
<div style="left:869.8000000000001px;top:453px;font-size:7.23px;line-height:7.23px;color:#f0f0f0;font-weight:bold;font-family:'Liberation Sans',sans-serif;white-space:nowrap;transform:scaleX(0.9132);transform-origin:left top;-webkit-text-stroke:0;">LRR</div>
<div style="left:209.5px;top:478px;font-size:7.20px;line-height:7.20px;color:#d8d8d8;font-weight:normal;font-family:'Liberation Sans',sans-serif;white-space:nowrap;">rried</div>
<div style="left:259.4px;top:478px;font-size:7.20px;line-height:7.20px;color:#d8d8d8;font-weight:normal;font-family:'Liberation Sans',sans-serif;white-space:nowrap;">Female</div>
<div style="left:320.4px;top:478px;font-size:7.20px;line-height:7.20px;color:#d8d8d8;font-weight:normal;font-family:'Liberation Sans',sans-serif;white-space:nowrap;">40000</div>
<div style="left:381.5px;top:478px;font-size:7.20px;line-height:7.20px;color:#d8d8d8;font-weight:normal;font-family:'Liberation Sans',sans-serif;white-space:nowrap;">1</div>
<div style="left:442.5px;top:478px;font-size:7.20px;line-height:7.20px;color:#d8d8d8;font-weight:normal;font-family:'Liberation Sans',sans-serif;white-space:nowrap;">Bachelors</div>
<div style="left:503.59999999999997px;top:478px;font-size:7.20px;line-height:7.20px;color:#d8d8d8;font-weight:normal;font-family:'Liberation Sans',sans-serif;white-space:nowrap;">Skilled Manual</div>
<div style="left:564.6px;top:478px;font-size:7.20px;line-height:7.20px;color:#d8d8d8;font-weight:normal;font-family:'Liberation Sans',sans-serif;white-space:nowrap;">Yes</div>
<div style="left:625.6px;top:478px;font-size:7.20px;line-height:7.20px;color:#d8d8d8;font-weight:normal;font-family:'Liberation Sans',sans-serif;white-space:nowrap;">0</div>
<div style="left:686.7px;top:478px;font-size:7.20px;line-height:7.20px;color:#d8d8d8;font-weight:normal;font-family:'Liberation Sans',sans-serif;white-space:nowrap;">0-1 Miles</div>
<div style="left:747.7px;top:478px;font-size:7.20px;line-height:7.20px;color:#d8d8d8;font-weight:normal;font-family:'Liberation Sans',sans-serif;white-space:nowrap;">42</div>
<div style="left:808.8000000000001px;top:478px;font-size:7.20px;line-height:7.20px;color:#d8d8d8;font-weight:normal;font-family:'Liberation Sans',sans-serif;white-space:nowrap;">false</div>
<div style="left:869.8000000000001px;top:478px;font-size:7.20px;line-height:7.20px;color:#d8d8d8;font-weight:normal;font-family:'Liberation Sans',sans-serif;white-space:nowrap;">male</div>
<div style="left:209.5px;top:494px;font-size:7.20px;line-height:7.20px;color:#d8d8d8;font-weight:normal;font-family:'Liberation Sans',sans-serif;white-space:nowrap;">rried</div>
<div style="left:259.4px;top:494px;font-size:7.20px;line-height:7.20px;color:#d8d8d8;font-weight:normal;font-family:'Liberation Sans',sans-serif;white-space:nowrap;">Male</div>
<div style="left:320.4px;top:494px;font-size:7.20px;line-height:7.20px;color:#d8d8d8;font-weight:normal;font-family:'Liberation Sans',sans-serif;white-space:nowrap;">30000</div>
<div style="left:381.5px;top:494px;font-size:7.20px;line-height:7.20px;color:#d8d8d8;font-weight:normal;font-family:'Liberation Sans',sans-serif;white-space:nowrap;">3</div>
<div style="left:442.5px;top:494px;font-size:7.20px;line-height:7.20px;color:#d8d8d8;font-weight:normal;font-family:'Liberation Sans',sans-serif;white-space:nowrap;">Partial College</div>
<div style="left:503.59999999999997px;top:494px;font-size:7.20px;line-height:7.20px;color:#d8d8d8;font-weight:normal;font-family:'Liberation Sans',sans-serif;white-space:nowrap;">Clerical</div>
<div style="left:564.6px;top:494px;font-size:7.20px;line-height:7.20px;color:#d8d8d8;font-weight:normal;font-family:'Liberation Sans',sans-serif;white-space:nowrap;">Yes</div>
<div style="left:625.6px;top:494px;font-size:7.20px;line-height:7.20px;color:#d8d8d8;font-weight:normal;font-family:'Liberation Sans',sans-serif;white-space:nowrap;">1</div>
<div style="left:686.7px;top:494px;font-size:7.20px;line-height:7.20px;color:#d8d8d8;font-weight:normal;font-family:'Liberation Sans',sans-serif;white-space:nowrap;">0-1 Miles</div>
<div style="left:747.7px;top:494px;font-size:7.20px;line-height:7.20px;color:#d8d8d8;font-weight:normal;font-family:'Liberation Sans',sans-serif;white-space:nowrap;">43</div>
<div style="left:808.8000000000001px;top:494px;font-size:7.20px;line-height:7.20px;color:#d8d8d8;font-weight:normal;font-family:'Liberation Sans',sans-serif;white-space:nowrap;">false</div>
<div style="left:869.8000000000001px;top:494px;font-size:7.20px;line-height:7.20px;color:#d8d8d8;font-weight:normal;font-family:'Liberation Sans',sans-serif;white-space:nowrap;">male</div>
<div style="left:209.5px;top:510px;font-size:7.20px;line-height:7.20px;color:#d8d8d8;font-weight:normal;font-family:'Liberation Sans',sans-serif;white-space:nowrap;">rried</div>
<div style="left:259.4px;top:510px;font-size:7.20px;line-height:7.20px;color:#d8d8d8;font-weight:normal;font-family:'Liberation Sans',sans-serif;white-space:nowrap;">Male</div>
<div style="left:320.4px;top:510px;font-size:7.20px;line-height:7.20px;color:#d8d8d8;font-weight:normal;font-family:'Liberation Sans',sans-serif;white-space:nowrap;">80000</div>
<div style="left:381.5px;top:510px;font-size:7.20px;line-height:7.20px;color:#d8d8d8;font-weight:normal;font-family:'Liberation Sans',sans-serif;white-space:nowrap;">5</div>
<div style="left:442.5px;top:510px;font-size:7.20px;line-height:7.20px;color:#d8d8d8;font-weight:normal;font-family:'Liberation Sans',sans-serif;white-space:nowrap;">Partial College</div>
<div style="left:503.59999999999997px;top:510px;font-size:7.20px;line-height:7.20px;color:#d8d8d8;font-weight:normal;font-family:'Liberation Sans',sans-serif;white-space:nowrap;">Professional</div>
<div style="left:564.6px;top:510px;font-size:7.20px;line-height:7.20px;color:#d8d8d8;font-weight:normal;font-family:'Liberation Sans',sans-serif;white-space:nowrap;">No</div>
<div style="left:625.6px;top:510px;font-size:7.20px;line-height:7.20px;color:#d8d8d8;font-weight:normal;font-family:'Liberation Sans',sans-serif;white-space:nowrap;">2</div>
<div style="left:686.7px;top:510px;font-size:7.20px;line-height:7.20px;color:#d8d8d8;font-weight:normal;font-family:'Liberation Sans',sans-serif;white-space:nowrap;">2-5 Miles</div>
<div style="left:747.7px;top:510px;font-size:7.20px;line-height:7.20px;color:#d8d8d8;font-weight:normal;font-family:'Liberation Sans',sans-serif;white-space:nowrap;">60</div>
<div style="left:808.8000000000001px;top:510px;font-size:7.20px;line-height:7.20px;color:#d8d8d8;font-weight:normal;font-family:'Liberation Sans',sans-serif;white-space:nowrap;">false</div>
<div style="left:869.8000000000001px;top:510px;font-size:7.20px;line-height:7.20px;color:#d8d8d8;font-weight:normal;font-family:'Liberation Sans',sans-serif;white-space:nowrap;">female</div>
<div style="left:209.5px;top:526px;font-size:7.20px;line-height:7.20px;color:#d8d8d8;font-weight:normal;font-family:'Liberation Sans',sans-serif;white-space:nowrap;">gle</div>
<div style="left:259.4px;top:526px;font-size:7.20px;line-height:7.20px;color:#d8d8d8;font-weight:normal;font-family:'Liberation Sans',sans-serif;white-space:nowrap;">Male</div>
<div style="left:320.4px;top:526px;font-size:7.20px;line-height:7.20px;color:#d8d8d8;font-weight:normal;font-family:'Liberation Sans',sans-serif;white-space:nowrap;">70000</div>
<div style="left:381.5px;top:526px;font-size:7.20px;line-height:7.20px;color:#d8d8d8;font-weight:normal;font-family:'Liberation Sans',sans-serif;white-space:nowrap;">0</div>
<div style="left:442.5px;top:526px;font-size:7.20px;line-height:7.20px;color:#d8d8d8;font-weight:normal;font-family:'Liberation Sans',sans-serif;white-space:nowrap;">Bachelors</div>
<div style="left:503.59999999999997px;top:526px;font-size:7.20px;line-height:7.20px;color:#d8d8d8;font-weight:normal;font-family:'Liberation Sans',sans-serif;white-space:nowrap;">Professional</div>
<div style="left:564.6px;top:526px;font-size:7.20px;line-height:7.20px;color:#d8d8d8;font-weight:normal;font-family:'Liberation Sans',sans-serif;white-space:nowrap;">Yes</div>
<div style="left:625.6px;top:526px;font-size:7.20px;line-height:7.20px;color:#d8d8d8;font-weight:normal;font-family:'Liberation Sans',sans-serif;white-space:nowrap;">1</div>
<div style="left:686.7px;top:526px;font-size:7.20px;line-height:7.20px;color:#d8d8d8;font-weight:normal;font-family:'Liberation Sans',sans-serif;white-space:nowrap;">5-10 Miles</div>
<div style="left:747.7px;top:526px;font-size:7.20px;line-height:7.20px;color:#d8d8d8;font-weight:normal;font-family:'Liberation Sans',sans-serif;white-space:nowrap;">41</div>
<div style="left:808.8000000000001px;top:526px;font-size:7.20px;line-height:7.20px;color:#d8d8d8;font-weight:normal;font-family:'Liberation Sans',sans-serif;white-space:nowrap;">true</div>
<div style="left:869.8000000000001px;top:526px;font-size:7.20px;line-height:7.20px;color:#d8d8d8;font-weight:normal;font-family:'Liberation Sans',sans-serif;white-space:nowrap;">female</div>
<div style="left:926.4px;top:472.5px;width:6.6px;height:66px;background:#3a3a3a;"></div>
<div style="left:927px;top:479.5px;width:5.5px;height:10px;background:#252525;"></div>
<svg style="left:926px;top:472px;" width="8" height="68" viewBox="0 0 8 68"><path d="M1.5,5 L3.8,2.5 L6,5Z M1.5,62.5 L3.8,65 L6,62.5Z" fill="#ccc"/></svg>
<div style="left:209px;top:540.2px;width:717px;height:6px;background:#2d2d2d;"></div>
<div style="left:209px;top:540.2px;width:74.6px;height:6px;background:#555555;"></div>
<svg style="left:209px;top:540px;" width="6" height="7" viewBox="0 0 6 7"><path d="M3.5,1 L1,3.2 L3.5,5.4Z" fill="#ccc"/></svg>
<svg style="left:919px;top:540px;" width="6" height="7" viewBox="0 0 6 7"><path d="M2,1 L4.5,3.2 L2,5.4Z" fill="#ccc"/></svg>
<div style="left:926.4px;top:540px;width:6.4px;height:6.2px;background:#ffffff;"></div>
<div style="left:209px;top:546.2px;width:725px;height:17.5px;background:#474747;"></div>
<div style="left:209px;top:546.2px;width:53px;height:17.5px;background:#4f4f4f;"></div>
<div style="left:264px;top:546.2px;width:54.8px;height:17.5px;background:#4f4f4f;"></div>
<div style="left:321.2px;top:546.2px;width:55px;height:17.5px;background:#474747;"></div>
<div style="left:262px;top:546.2px;width:2px;height:17.5px;background:#2a2a2a;"></div>
<div style="left:318.8px;top:546.2px;width:2.4px;height:17.5px;background:#2a2a2a;"></div>
<svg style="left:216px;top:551px;" width="8" height="6" viewBox="0 0 8 6"><path d="M1,4.5 L4,1.5 L7,4.5" stroke="#ccc" stroke-width="0.9" fill="none"/></svg>
<div style="left:227.3px;top:554px;font-size:8.22px;line-height:8.22px;color:#e4e4e4;font-weight:normal;font-family:'Liberation Sans',sans-serif;white-space:nowrap;transform:scaleX(0.8696);transform-origin:left top;-webkit-text-stroke:0.25px currentColor">Preview</div>
<svg style="left:270.6px;top:551px;" width="8" height="6" viewBox="0 0 8 6"><path d="M1,4.5 L4,1.5 L7,4.5" stroke="#ccc" stroke-width="0.9" fill="none"/></svg>
<div style="left:281.6px;top:554px;font-size:8.22px;line-height:8.22px;color:#e4e4e4;font-weight:normal;font-family:'Liberation Sans',sans-serif;white-space:nowrap;transform:scaleX(0.8696);transform-origin:left top;-webkit-text-stroke:0.25px currentColor">Progress</div>
<svg style="left:326.4px;top:551px;" width="8" height="6" viewBox="0 0 8 6"><path d="M1,4.5 L4,1.5 L7,4.5" stroke="#ccc" stroke-width="0.9" fill="none"/></svg>
<div style="left:339px;top:554px;font-size:8.22px;line-height:8.22px;color:#e4e4e4;font-weight:normal;font-family:'Liberation Sans',sans-serif;white-space:nowrap;transform:scaleX(0.8696);transform-origin:left top;-webkit-text-stroke:0.25px currentColor">Errors</div>
<div style="left:933px;top:430px;width:1px;height:114px;background:#a0a0a0;"></div>
<div style="left:936px;top:53px;width:233px;height:18px;background:#454545;"></div>
<div style="left:936px;top:71px;width:233px;height:1px;background:#2a2a2a;"></div>
<div style="left:936px;top:72px;width:233px;height:491px;background:#484848;"></div>
<div style="left:1169px;top:0px;width:2px;height:586px;background:#3a3a3a;"></div>
<div style="left:940.6px;top:58px;font-size:8.39px;line-height:8.39px;color:#dfe6ee;font-weight:normal;font-family:'Liberation Sans',sans-serif;white-space:nowrap;transform:scaleX(0.8696);transform-origin:left top;">Properties</div>
<svg style="left:1141px;top:57px;" width="12" height="10" viewBox="0 0 12 10"><path d="M1.5,5.2 Q5.6,1.2 9.8,5.2 Q5.6,9.2 1.5,5.2Z" fill="none" stroke="#c8c8c8" stroke-width="1.1"/><circle cx="5.6" cy="5.2" r="1.5" fill="#c8c8c8"/></svg>
<svg style="left:1157px;top:58px;" width="7" height="9" viewBox="0 0 7 9"><path d="M1.6,1 L5,4 L1.6,7" stroke="#ccc" stroke-width="0.9" fill="none"/></svg>
<div style="left:943px;top:79px;width:220px;height:58px;background:#515151;box-sizing:border-box;border:1px solid #323232"></div>
<div style="left:1158px;top:80px;width:4px;height:56px;background:#4c4c4c;"></div>
<svg style="left:948.3px;top:84.3px;" width="9" height="6" viewBox="0 0 9 6"><path d="M1,1.2 L4.4,4.4 L7.8,1.2" stroke="#b8b8b8" stroke-width="0.9" fill="none"/></svg>
<div style="left:960.8px;top:84px;font-size:7.88px;line-height:7.88px;color:#f0f0f0;font-weight:bold;font-family:'Liberation Sans',sans-serif;white-space:nowrap;transform:scaleX(0.8696);transform-origin:left top;-webkit-text-stroke:0;">Result Properties</div>
<div style="left:950px;top:97px;font-size:8.16px;line-height:8.16px;color:#a2a2a2;font-weight:normal;font-family:'Liberation Sans',sans-serif;white-space:nowrap;transform:scaleX(0.8696);transform-origin:left top;">Resulting Table Name</div>
<div style="left:952.2px;top:112px;width:101.0px;height:15.1px;background:#f7f7f7;"></div>
<div style="left:952.2px;top:112px;width:200.5px;height:15.1px;background:#f7f7f7;"></div>
<div style="left:955.9px;top:117px;font-size:8.28px;line-height:8.28px;color:#333;font-weight:normal;font-family:'Liberation Sans',sans-serif;white-space:nowrap;transform:scaleX(0.8696);transform-origin:left top;-webkit-text-stroke:0.08px currentColor">SpreadhSheetDemoCutomerProfile</div>
<div style="left:943px;top:138px;width:220px;height:271.5px;background:#515151;box-sizing:border-box;border:1px solid #323232"></div>
<div style="left:1158px;top:139px;width:4px;height:269.5px;background:#4c4c4c;"></div>
<svg style="left:948.3px;top:144.5px;" width="9" height="6" viewBox="0 0 9 6"><path d="M1,1.2 L4.4,4.4 L7.8,1.2" stroke="#b8b8b8" stroke-width="0.9" fill="none"/></svg>
<svg style="left:958px;top:139px" width="15.0" height="15.0" viewBox="0 0 15 15"><ellipse cx="7.6" cy="7.0" rx="4.4" ry="2.5" fill="none" stroke="#9a9a9a" stroke-width="1.6"/><path fill-rule="evenodd" fill="#2a8fd4" d="M6.3,6.7 H10.4 Q12.3,6.7 12.3,8.5 Q12.3,9.9 11,10.25 L12.6,12.9 H10.5 L9.2,10.6 H8.2 V12.9 H6.3 Z M8.2,8.1 V9.3 H10 Q10.5,9.3 10.5,8.7 Q10.5,8.1 10,8.1 Z"/></svg>
<div style="left:976.8px;top:145px;font-size:7.82px;line-height:7.82px;color:#f0f0f0;font-weight:bold;font-family:'Liberation Sans',sans-serif;white-space:nowrap;transform:scaleX(0.8696);transform-origin:left top;-webkit-text-stroke:0;">Script</div>
<div style="left:951px;top:155.6px;width:203.6px;height:15px;background:#f7f7f7;"></div>
<div style="left:956.5px;top:160px;font-size:8.28px;line-height:8.28px;color:#333;font-weight:normal;font-family:'Liberation Sans',sans-serif;white-space:nowrap;transform:scaleX(0.8696);transform-origin:left top;-webkit-text-stroke:0.08px currentColor">Quick script</div>
<svg style="left:1142px;top:160px;" width="8" height="6" viewBox="0 0 8 6"><path d="M0.5,1.5 H6.5 L3.5,4.5Z" fill="#888"/></svg>
<div style="left:950px;top:181px;font-size:8.16px;line-height:8.16px;color:#a2a2a2;font-weight:normal;font-family:'Liberation Sans',sans-serif;white-space:nowrap;transform:scaleX(0.8696);transform-origin:left top;">Script:</div>
<div style="left:950.2px;top:193px;width:205px;height:171.6px;background:#171717;"></div>
<div style="left:946.00px;width:20px;text-align:right;top:197px;font-size:7.00px;line-height:7.00px;color:#5a5a5a;font-weight:normal;font-family:'Liberation Mono',monospace;white-space:nowrap;letter-spacing:-0.18px">1</div>
<div style="left:970px;top:197px;font-size:7.00px;line-height:7.00px;color:#a8bd52;font-weight:normal;font-family:'Liberation Mono',monospace;white-space:nowrap;letter-spacing:-0.18px"><span style="color:#a8bd52">customerProfile</span><span style="color:#cfcfcf">=</span><span style="color:#a8bd52">data.frame</span><span style="color:#6aa0e0">(</span><span style="color:#a8bd52">Gender</span><span style="color:#cfcfcf">,</span><span style="color:#a8bd52">Income</span><span style="color:#cfcfcf">,</span><span style="color:#a8bd52">Chil</span></div>
<div style="left:970px;top:205px;font-size:7.00px;line-height:7.00px;color:#a8bd52;font-weight:normal;font-family:'Liberation Mono',monospace;white-space:nowrap;letter-spacing:-0.18px"><span style="color:#a8bd52">dren</span><span style="color:#6aa0e0">)</span></div>
<div style="left:946.00px;width:20px;text-align:right;top:214px;font-size:7.00px;line-height:7.00px;color:#5a5a5a;font-weight:normal;font-family:'Liberation Mono',monospace;white-space:nowrap;letter-spacing:-0.18px">2</div>
<div style="left:946.00px;width:20px;text-align:right;top:222px;font-size:7.00px;line-height:7.00px;color:#5a5a5a;font-weight:normal;font-family:'Liberation Mono',monospace;white-space:nowrap;letter-spacing:-0.18px">3</div>
<div style="left:970px;top:222px;font-size:7.00px;line-height:7.00px;color:#a8bd52;font-weight:normal;font-family:'Liberation Mono',monospace;white-space:nowrap;letter-spacing:-0.18px"><span style="color:#a8bd52">lm</span><span style="color:#cfcfcf">=</span><span style="color:#a8bd52">glm</span><span style="color:#6aa0e0">(</span><span style="color:#a8bd52">customerProfile</span><span style="color:#f0f0f0">$</span><span style="color:#a8bd52">Gender</span><span style="color:#cfcfcf">~</span><span style="color:#a8bd52">customerProfile</span></div>
<div style="left:970px;top:231px;font-size:7.00px;line-height:7.00px;color:#a8bd52;font-weight:normal;font-family:'Liberation Mono',monospace;white-space:nowrap;letter-spacing:-0.18px"><span style="color:#f0f0f0">$</span><span style="color:#a8bd52">Income</span><span style="color:#cfcfcf">+</span><span style="color:#a8bd52">customerProfile</span><span style="color:#f0f0f0">$</span><span style="color:#a8bd52">Children</span><span style="color:#cfcfcf">,</span><span style="color:#a8bd52">family</span> <span style="color:#cfcfcf">=</span></div>
<div style="left:970px;top:239px;font-size:7.00px;line-height:7.00px;color:#a8bd52;font-weight:normal;font-family:'Liberation Mono',monospace;white-space:nowrap;letter-spacing:-0.18px"><span style="color:#a8bd52">binomial</span><span style="color:#cfcfcf">,</span><span style="color:#a8bd52">data</span> <span style="color:#cfcfcf">=</span> <span style="color:#a8bd52">customerProfile</span><span style="color:#6aa0e0">)</span></div>
<div style="left:946.00px;width:20px;text-align:right;top:248px;font-size:7.00px;line-height:7.00px;color:#5a5a5a;font-weight:normal;font-family:'Liberation Mono',monospace;white-space:nowrap;letter-spacing:-0.18px">4</div>
<div style="left:946.00px;width:20px;text-align:right;top:256px;font-size:7.00px;line-height:7.00px;color:#5a5a5a;font-weight:normal;font-family:'Liberation Mono',monospace;white-space:nowrap;letter-spacing:-0.18px">5</div>
<div style="left:970px;top:256px;font-size:7.00px;line-height:7.00px;color:#a8bd52;font-weight:normal;font-family:'Liberation Mono',monospace;white-space:nowrap;letter-spacing:-0.18px"><span style="color:#a8bd52">prediction</span><span style="color:#cfcfcf">=</span><span style="color:#a8bd52">predict</span><span style="color:#6aa0e0">(</span><span style="color:#a8bd52">lm</span><span style="color:#cfcfcf">,</span> <span style="color:#a8bd52">type</span> <span style="color:#cfcfcf">=</span> <span style="color:#e0a060">'response'</span><span style="color:#6aa0e0">)</span></div>
<div style="left:946.00px;width:20px;text-align:right;top:265px;font-size:7.00px;line-height:7.00px;color:#5a5a5a;font-weight:normal;font-family:'Liberation Mono',monospace;white-space:nowrap;letter-spacing:-0.18px">6</div>
<div style="left:946.00px;width:20px;text-align:right;top:273px;font-size:7.00px;line-height:7.00px;color:#5a5a5a;font-weight:normal;font-family:'Liberation Mono',monospace;white-space:nowrap;letter-spacing:-0.18px">7</div>
<div style="left:970px;top:273px;font-size:7.00px;line-height:7.00px;color:#a8bd52;font-weight:normal;font-family:'Liberation Mono',monospace;white-space:nowrap;letter-spacing:-0.18px"><span style="color:#a8bd52">resultProbability</span><span style="color:#cfcfcf">=</span><span style="color:#a8bd52">as.data.frame</span><span style="color:#6aa0e0">(</span><span style="color:#a8bd52">prediction</span><span style="color:#6aa0e0">)</span></div>
<div style="left:946.00px;width:20px;text-align:right;top:282px;font-size:7.00px;line-height:7.00px;color:#5a5a5a;font-weight:normal;font-family:'Liberation Mono',monospace;white-space:nowrap;letter-spacing:-0.18px">8</div>
<div style="left:946.00px;width:20px;text-align:right;top:291px;font-size:7.00px;line-height:7.00px;color:#5a5a5a;font-weight:normal;font-family:'Liberation Mono',monospace;white-space:nowrap;letter-spacing:-0.18px">9</div>
<div style="left:970px;top:291px;font-size:7.00px;line-height:7.00px;color:#a8bd52;font-weight:normal;font-family:'Liberation Mono',monospace;white-space:nowrap;letter-spacing:-0.18px"><span style="color:#a8bd52">resultProbability</span><span style="color:#6aa0e0">[</span><span style="color:#cfcfcf">,</span><span style="color:#c08ad0">2</span><span style="color:#6aa0e0">]</span><span style="color:#cfcfcf">=</span><span style="color:#f0b060;font-weight:bold">"female"</span></div>
<div style="left:946.00px;width:20px;text-align:right;top:299px;font-size:7.00px;line-height:7.00px;color:#5a5a5a;font-weight:normal;font-family:'Liberation Mono',monospace;white-space:nowrap;letter-spacing:-0.18px">10</div>
<div style="left:946.00px;width:20px;text-align:right;top:308px;font-size:7.00px;line-height:7.00px;color:#5a5a5a;font-weight:normal;font-family:'Liberation Mono',monospace;white-space:nowrap;letter-spacing:-0.18px">11</div>
<div style="left:970px;top:308px;font-size:7.00px;line-height:7.00px;color:#a8bd52;font-weight:normal;font-family:'Liberation Mono',monospace;white-space:nowrap;letter-spacing:-0.18px"><span style="color:#a8bd52">resultProbability</span><span style="color:#6aa0e0">[</span><span style="color:#a8bd52">resultProbability</span><span style="color:#6aa0e0">[</span><span style="color:#cfcfcf">,</span><span style="color:#a8bd52">1</span><span style="color:#6aa0e0">]</span></div>
<div style="left:970px;top:316px;font-size:7.00px;line-height:7.00px;color:#a8bd52;font-weight:normal;font-family:'Liberation Mono',monospace;white-space:nowrap;letter-spacing:-0.18px"><span style="color:#cfcfcf">&lt;</span><span style="color:#c08ad0">0.5</span><span style="color:#cfcfcf">,</span><span style="color:#c08ad0">2</span><span style="color:#6aa0e0">]</span><span style="color:#cfcfcf">=</span><span style="color:#f0b060;font-weight:bold">"male"</span></div>
<div style="left:946.00px;width:20px;text-align:right;top:325px;font-size:7.00px;line-height:7.00px;color:#5a5a5a;font-weight:normal;font-family:'Liberation Mono',monospace;white-space:nowrap;letter-spacing:-0.18px">12</div>
<div style="left:946.00px;width:20px;text-align:right;top:333px;font-size:7.00px;line-height:7.00px;color:#5a5a5a;font-weight:normal;font-family:'Liberation Mono',monospace;white-space:nowrap;letter-spacing:-0.18px">13</div>
<div style="left:970px;top:333px;font-size:7.00px;line-height:7.00px;color:#a8bd52;font-weight:normal;font-family:'Liberation Mono',monospace;white-space:nowrap;letter-spacing:-0.18px"><span style="color:#a8bd52">LRR</span> <span style="color:#cfcfcf">=</span><span style="color:#a8bd52">resultProbability</span><span style="color:#6aa0e0">[</span><span style="color:#cfcfcf">,</span><span style="color:#c08ad0">2</span><span style="color:#6aa0e0">]</span></div>
<div style="left:950px;top:374px;font-size:8.16px;line-height:8.16px;color:#a2a2a2;font-weight:normal;font-family:'Liberation Sans',sans-serif;white-space:nowrap;transform:scaleX(0.8696);transform-origin:left top;">Packages Names (split by comma)</div>
<div style="left:951px;top:387.5px;width:204px;height:14.2px;background:#f7f7f7;"></div>
<div style="left:943px;top:412px;width:220px;height:74px;background:#515151;box-sizing:border-box;border:1px solid #323232"></div>
<div style="left:1158px;top:413px;width:4px;height:72px;background:#4c4c4c;"></div>
<svg style="left:948.3px;top:418px;" width="9" height="6" viewBox="0 0 9 6"><path d="M1,1.2 L4.4,4.4 L7.8,1.2" stroke="#b8b8b8" stroke-width="0.9" fill="none"/></svg>
<svg style="left:958px;top:412px" width="15.0" height="15.0" viewBox="0 0 15 15"><ellipse cx="7.6" cy="7.0" rx="4.4" ry="2.5" fill="none" stroke="#9a9a9a" stroke-width="1.6"/><path fill-rule="evenodd" fill="#2a8fd4" d="M6.3,6.7 H10.4 Q12.3,6.7 12.3,8.5 Q12.3,9.9 11,10.25 L12.6,12.9 H10.5 L9.2,10.6 H8.2 V12.9 H6.3 Z M8.2,8.1 V9.3 H10 Q10.5,9.3 10.5,8.7 Q10.5,8.1 10,8.1 Z"/></svg>
<div style="left:976.3px;top:418px;font-size:8.28px;line-height:8.28px;color:#f0f0f0;font-weight:bold;font-family:'Liberation Sans',sans-serif;white-space:nowrap;transform:scaleX(0.8696);transform-origin:left top;-webkit-text-stroke:0;">Input</div>
<div style="left:896.50px;width:200px;text-align:center;top:431px;font-size:8.16px;line-height:8.16px;color:#c0c0c0;font-weight:normal;font-family:'Liberation Sans',sans-serif;white-space:nowrap;transform:scaleX(0.8696);transform-origin:center top;">Source</div>
<div style="left:990.00px;width:200px;text-align:center;top:431px;font-size:8.16px;line-height:8.16px;color:#c0c0c0;font-weight:normal;font-family:'Liberation Sans',sans-serif;white-space:nowrap;transform:scaleX(0.8696);transform-origin:center top;">Target</div>
<div style="left:950px;top:440.3px;width:186.5px;height:1.2px;background:#b0b0b0;"></div>
<div style="left:896.50px;width:200px;text-align:center;top:445px;font-size:8.16px;line-height:8.16px;color:#bcbcbc;font-weight:normal;font-family:'Liberation Sans',sans-serif;white-space:nowrap;transform:scaleX(0.8696);transform-origin:center top;">Gender</div>
<div style="left:990.00px;width:200px;text-align:center;top:445px;font-size:8.16px;line-height:8.16px;color:#bcbcbc;font-weight:normal;font-family:'Liberation Sans',sans-serif;white-space:nowrap;transform:scaleX(0.8696);transform-origin:center top;">Gender</div>
<div style="left:950px;top:453.7px;width:186.5px;height:1px;background:#5c5c5c;"></div>
<svg style="left:1143px;top:444.0px;" width="9" height="9" viewBox="0 0 9 9"><path d="M0.8,0.8 L8,8 M8,0.8 L0.8,8" stroke="#e8452c" stroke-width="1.3"/></svg>
<div style="left:896.50px;width:200px;text-align:center;top:457px;font-size:8.16px;line-height:8.16px;color:#bcbcbc;font-weight:normal;font-family:'Liberation Sans',sans-serif;white-space:nowrap;transform:scaleX(0.8696);transform-origin:center top;">Income</div>
<div style="left:990.00px;width:200px;text-align:center;top:457px;font-size:8.16px;line-height:8.16px;color:#bcbcbc;font-weight:normal;font-family:'Liberation Sans',sans-serif;white-space:nowrap;transform:scaleX(0.8696);transform-origin:center top;">Income</div>
<div style="left:950px;top:465.5px;width:186.5px;height:1px;background:#5c5c5c;"></div>
<svg style="left:1143px;top:456.1px;" width="9" height="9" viewBox="0 0 9 9"><path d="M0.8,0.8 L8,8 M8,0.8 L0.8,8" stroke="#e8452c" stroke-width="1.3"/></svg>
<div style="left:896.50px;width:200px;text-align:center;top:470px;font-size:8.16px;line-height:8.16px;color:#bcbcbc;font-weight:normal;font-family:'Liberation Sans',sans-serif;white-space:nowrap;transform:scaleX(0.8696);transform-origin:center top;">Children</div>
<div style="left:990.00px;width:200px;text-align:center;top:470px;font-size:8.16px;line-height:8.16px;color:#bcbcbc;font-weight:normal;font-family:'Liberation Sans',sans-serif;white-space:nowrap;transform:scaleX(0.8696);transform-origin:center top;">Children</div>
<div style="left:950px;top:477.3px;width:186.5px;height:1px;background:#5c5c5c;"></div>
<svg style="left:1143px;top:468.2px;" width="9" height="9" viewBox="0 0 9 9"><path d="M0.8,0.8 L8,8 M8,0.8 L0.8,8" stroke="#e8452c" stroke-width="1.3"/></svg>
<svg style="left:1143px;top:429px;" width="9" height="9" viewBox="0 0 9 9"><path d="M4.2,0.5 V8.2 M0.3,4.4 H8.1" stroke="#3a9ce0" stroke-width="1.5"/></svg>
<div style="left:943px;top:488.5px;width:220px;height:80px;background:#515151;box-sizing:border-box;border:1px solid #323232"></div>
<div style="left:1158px;top:489.5px;width:4px;height:78px;background:#4c4c4c;"></div>
<svg style="left:948.3px;top:495px;" width="9" height="6" viewBox="0 0 9 6"><path d="M1,1.2 L4.4,4.4 L7.8,1.2" stroke="#b8b8b8" stroke-width="0.9" fill="none"/></svg>
<svg style="left:958px;top:489px" width="15.0" height="15.0" viewBox="0 0 15 15"><ellipse cx="7.6" cy="7.0" rx="4.4" ry="2.5" fill="none" stroke="#9a9a9a" stroke-width="1.6"/><path fill-rule="evenodd" fill="#2a8fd4" d="M6.3,6.7 H10.4 Q12.3,6.7 12.3,8.5 Q12.3,9.9 11,10.25 L12.6,12.9 H10.5 L9.2,10.6 H8.2 V12.9 H6.3 Z M8.2,8.1 V9.3 H10 Q10.5,9.3 10.5,8.7 Q10.5,8.1 10,8.1 Z"/></svg>
<div style="left:976.7px;top:494px;font-size:8.28px;line-height:8.28px;color:#f0f0f0;font-weight:bold;font-family:'Liberation Sans',sans-serif;white-space:nowrap;transform:scaleX(0.8696);transform-origin:left top;-webkit-text-stroke:0;">Output</div>
<div style="left:890.50px;width:200px;text-align:center;top:508px;font-size:8.16px;line-height:8.16px;color:#c0c0c0;font-weight:normal;font-family:'Liberation Sans',sans-serif;white-space:nowrap;transform:scaleX(0.8696);transform-origin:center top;">Data Frame</div>
<div style="left:972.00px;width:200px;text-align:center;top:508px;font-size:8.16px;line-height:8.16px;color:#c0c0c0;font-weight:normal;font-family:'Liberation Sans',sans-serif;white-space:nowrap;transform:scaleX(0.8696);transform-origin:center top;">Column Name</div>
<div style="left:1024.70px;width:200px;text-align:center;top:508px;font-size:8.16px;line-height:8.16px;color:#c0c0c0;font-weight:normal;font-family:'Liberation Sans',sans-serif;white-space:nowrap;transform:scaleX(0.8696);transform-origin:center top;">Type</div>
<div style="left:950px;top:517px;width:186.5px;height:1.2px;background:#b0b0b0;"></div>
<div style="left:890.50px;width:200px;text-align:center;top:522px;font-size:8.16px;line-height:8.16px;color:#bcbcbc;font-weight:normal;font-family:'Liberation Sans',sans-serif;white-space:nowrap;transform:scaleX(0.8696);transform-origin:center top;">DataFrame1</div>
<div style="left:972.00px;width:200px;text-align:center;top:522px;font-size:8.16px;line-height:8.16px;color:#c4c4c4;font-weight:normal;font-family:'Liberation Sans',sans-serif;white-space:nowrap;transform:scaleX(0.8696);transform-origin:center top;">LRR</div>
<div style="left:1025.00px;width:200px;text-align:center;top:522px;font-size:7.47px;line-height:7.47px;color:#c4c4c4;font-weight:normal;font-family:'Liberation Sans',sans-serif;white-space:nowrap;transform:scaleX(0.8696);transform-origin:center top;font-style:italic">Aa</div>
<div style="left:950px;top:530.4px;width:186.5px;height:1px;background:#5a5a5a;"></div>
<svg style="left:1143px;top:520.3px;" width="9" height="9" viewBox="0 0 9 9"><path d="M0.8,0.8 L8,8 M8,0.8 L0.8,8" stroke="#e8452c" stroke-width="1.3"/></svg>
<svg style="left:1143px;top:506.5px;" width="9" height="9" viewBox="0 0 9 9"><path d="M4.2,0.5 V8.2 M0.3,4.4 H8.1" stroke="#3a9ce0" stroke-width="1.5"/></svg>
<div style="left:950px;top:542px;font-size:8.16px;line-height:8.16px;color:#a2a2a2;font-weight:normal;font-family:'Liberation Sans',sans-serif;white-space:nowrap;transform:scaleX(0.8696);transform-origin:left top;">Output options:</div>
<div style="left:950.7px;top:554.2px;width:204px;height:3.4px;background:#ffffff;"></div>
<div style="left:936px;top:559px;width:233px;height:4px;background:#484848;"></div>
<div style="left:1157.7px;top:480px;width:3px;height:38px;background:#5a5a5a;"></div>
<div style="left:90px;top:53px;width:25px;height:1px;background:#9a9a9a;"></div>
<div style="left:1040px;top:53px;width:26px;height:1px;background:#9a9a9a;"></div>
<div style="left:0px;top:563.7px;width:1171px;height:22.3px;background:#262626;"></div>
<div style="left:0px;top:565.8px;width:29.5px;height:2.2px;background:#f5b800;"></div>
<div style="left:82px;top:565.8px;width:1087px;height:2.2px;background:#f5b800;"></div>
<div style="left:28.8px;top:566px;width:2px;height:19px;background:#f5b800;border-radius:0 2px 0 0"></div>
<div style="left:80.8px;top:566px;width:2px;height:19px;background:#f5b800;border-radius:2px 0 0 0"></div>
<div style="left:29px;top:583.5px;width:53.5px;height:2.5px;background:#f5b800;"></div>
<div style="left:83.6px;top:570px;width:50px;height:16px;background:#41454a;"></div>
<div style="left:83.6px;top:584px;width:50px;height:2px;background:#f5b800;"></div>
<svg style="left:6px;top:571px;" width="13" height="12" viewBox="0 0 13 12"><path d="M1.5,5.8 L6.3,1.3 L11,5.8 M2.8,4.8 V11 H9.8 V4.8 M5.2,11 V8 H7.4 V11" stroke="#ddd" stroke-width="1" fill="none"/></svg>
<div style="left:35px;top:572px;font-size:8.36px;line-height:8.36px;color:#f4f4f4;font-weight:bold;font-family:'Liberation Sans',sans-serif;white-space:nowrap;transform:scaleX(0.9091);transform-origin:left top;-webkit-text-stroke:0;">* Model1</div>
<svg style="left:71px;top:574.6px;" width="7" height="5" viewBox="0 0 7 5"><path d="M0.3,0.5 H6.3 L3.3,3.6Z" fill="#eee"/></svg>
<div style="left:8.50px;width:200px;text-align:center;top:572px;font-size:8.51px;line-height:8.51px;color:#9a9ea4;font-weight:normal;font-family:'Liberation Sans',sans-serif;white-space:nowrap;transform:scaleX(0.8696);transform-origin:center top;">Model2</div>
<svg style="left:141px;top:572px;" width="10" height="10" viewBox="0 0 10 10"><path d="M4.8,0.5 V8.5 M0.8,4.5 H8.8" stroke="#ddd" stroke-width="1.2"/></svg>
<svg style="left:1136px;top:572px;" width="12" height="12" viewBox="0 0 12 12"><path d="M6,6 Q6,4.7 7.2,5 Q8.5,5.6 8,7.2 Q7,9 5,8.6 Q3,8 3.2,5.6 Q3.8,2.8 6.8,2.7 Q10.3,3 10.5,6.6 Q10.3,10.6 6.3,10.9 Q1.8,11 1.2,6.2 Q1.4,1.6 5.8,0.8" stroke="#ccc" stroke-width="0.9" fill="none"/></svg>
<svg style="left:1153px;top:572px;" width="12" height="12" viewBox="0 0 12 12"><circle cx="5" cy="5" r="3.9" fill="none" stroke="#ccc" stroke-width="1.1"/><path d="M7.8,7.8 L10.8,10.8" stroke="#ccc" stroke-width="1.2"/></svg>
</body></html>
